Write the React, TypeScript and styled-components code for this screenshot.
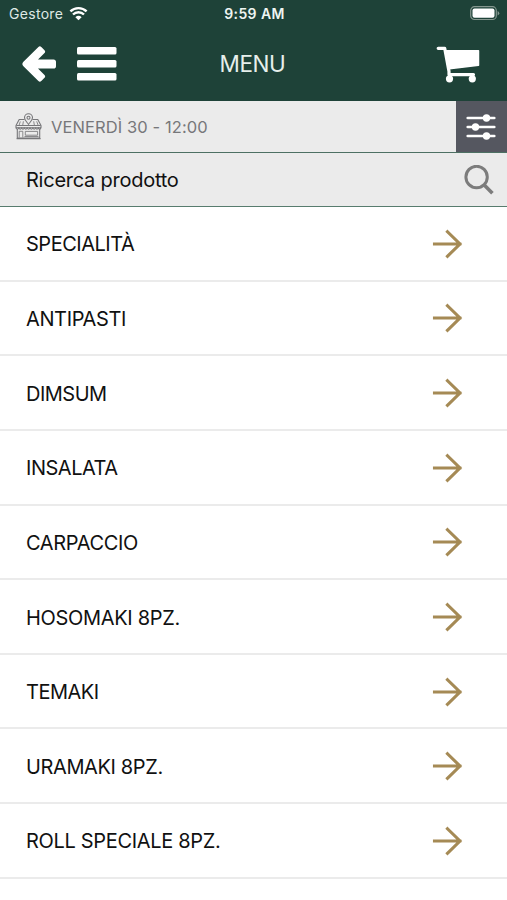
import React from "react";
import styled, { createGlobalStyle } from "styled-components";

const GlobalStyle = createGlobalStyle`
  * { box-sizing: border-box; }
  body { margin: 0; background: #fff; font-family: Inter, "Liberation Sans", sans-serif; color: #111; }
  button { border: 0; padding: 0; background: none; display: flex; color: inherit; font: inherit; }
  svg { display: block; flex: none; }
`;

const Screen = styled.main`
  width: 507px;
  height: 900px;
  overflow: hidden;
  background: #fff;
`;

const Header = styled.header`
  height: 101px;
  background: #1e4238;
  color: #fff;
`;

const ThreeColumns = styled.div`
  display: grid;
  grid-template-columns: 1fr auto 1fr;
  align-items: center;
`;

const StatusBar = styled(ThreeColumns)`
  height: 27px;
  padding: 0 7px 0 9px;
`;

const Carrier = styled.span`
  display: flex;
  align-items: center;
  gap: 6px;
  font-size: 14px;
  letter-spacing: 0.3px;
  color: #dfe9e5;
`;

const Clock = styled.time`
  font-size: 14px;
  font-weight: 600;
  letter-spacing: 0.4px;
  color: #eef5f2;
`;

const End = styled.div`
  display: flex;
  justify-content: flex-end;
`;

const TitleBar = styled(ThreeColumns)`
  height: 74px;
  padding: 0 27px 0 22px;
`;

const Actions = styled.div`
  display: flex;
  align-items: center;
  gap: 19.5px;
`;

const Title = styled.h1`
  margin: 0;
  padding-left: 3px;
  font-size: 22.5px;
  line-height: 28px;
  font-weight: 400;
  letter-spacing: -0.4px;
  color: #e6efeb;
`;

const PickupBar = styled.section`
  height: 52px;
  display: flex;
  align-items: stretch;
  background: #ebebeb;
  border-bottom: 1px solid #4d7063;
`;

const PickupInfo = styled.div`
  flex: 1;
  display: flex;
  align-items: center;
  gap: 9px;
  padding-left: 15px;
  font-size: 16.5px;
  color: #77777a;
`;

const PickupLabel = styled.span`
  letter-spacing: 0.1px;
`;

const FilterButton = styled.button`
  width: 51px;
  align-items: center;
  justify-content: center;
  && { background: #555760; padding-right: 2px; }
`;

const SearchBar = styled.label`
  height: 54px;
  display: flex;
  align-items: center;
  justify-content: space-between;
  padding: 0 13px 0 26px;
  background: #ebebeb;
  border-bottom: 1px solid #587c6e;
`;

const SearchLabel = styled.span`
  font-size: 20px;
  letter-spacing: -0.25px;
`;

const CategoryList = styled.ul`
  margin: 0;
  padding: 0;
  list-style: none;
`;

const Category = styled.li`
  height: 74.65px;
  display: flex;
  align-items: center;
  justify-content: space-between;
  padding: 1px 44px 0 26px;
  border-bottom: 2px solid #ebebeb;
`;

const CategoryName = styled.span<{ $tracking: number }>`
  padding-top: 1px;
  font-size: 20px;
  letter-spacing: ${(p) => p.$tracking}px;
`;

const categories = [
  { name: "SPECIALITÀ", tracking: -0.48 },
  { name: "ANTIPASTI", tracking: -0.38 },
  { name: "DIMSUM", tracking: -0.5 },
  { name: "INSALATA", tracking: -0.48 },
  { name: "CARPACCIO", tracking: -0.36 },
  { name: "HOSOMAKI 8PZ.", tracking: -0.32 },
  { name: "TEMAKI", tracking: -0.5 },
  { name: "URAMAKI 8PZ.", tracking: -0.38 },
  { name: "ROLL SPECIALE 8PZ.", tracking: -0.32 },
];

const WifiIcon = () => (
  <svg width="19" height="15" viewBox="0 0 19 15" fill="none" stroke="#fff" strokeWidth="2.4">
    <path d="M1.4 5.4a11.6 11.6 0 0 1 16.2 0M4 8.5a7.8 7.8 0 0 1 11 0" />
    <path d="M6.4 11.2a4.5 4.5 0 0 1 6.2 0L9.5 14.2z" fill="#fff" stroke="none" />
  </svg>
);

const BatteryIcon = () => (
  <svg width="30" height="15" viewBox="0 0 30 15">
    <rect x=".7" y=".7" width="25.6" height="12.8" rx="3.8" fill="none" stroke="#85978f" strokeWidth="1.2" />
    <rect x="2.5" y="2.4" width="22" height="9.4" rx="2" fill="#fff" />
    <path d="M27.6 5v4.5q1.7-.7 1.7-2.2T27.6 5z" fill="#85978f" />
  </svg>
);

const BackIcon = () => (
  <svg width="35" height="36" viewBox="0 0 35 36" fill="#fff">
    <path d="M1.2 16.1 16.4 1c.9-.9 2-.9 2.9 0l3.2 3.2c.9.9.9 2 0 2.9L16 13.4h15.6c1.5 0 2.4.9 2.4 2.4v4.4c0 1.5-.9 2.4-2.4 2.4H16l6.5 6.3c.9.9.9 2 0 2.9L19.3 35c-.9.9-2 .9-2.9 0L1.2 19.9c-1.1-1.1-1.1-2.7 0-3.8z" />
  </svg>
);

const MenuIcon = () => (
  <svg width="40" height="34" viewBox="0 0 40 34" fill="#fff">
    <rect y="0" width="39.5" height="7.4" rx="1.5" />
    <rect y="13" width="39.5" height="7.4" rx="1.5" />
    <rect y="26" width="39.5" height="7.4" rx="1.5" />
  </svg>
);

const CartIcon = () => (
  <svg width="44" height="37" viewBox="0 0 44 37" fill="none" stroke="#fff" strokeLinecap="round" strokeLinejoin="round">
    <path d="M2.2 2.3h6.5L13 25.4v3.2h24.5" strokeWidth="3.2" />
    <path d="M10 4.7h32.5v14.6L13.4 22.7z" fill="#fff" strokeWidth="1.5" />
    <circle cx="13.5" cy="32.8" r="3.6" fill="#fff" stroke="none" />
    <circle cx="36.3" cy="32.8" r="3.6" fill="#fff" stroke="none" />
  </svg>
);

const StoreIcon = () => (
  <svg width="27" height="27" viewBox="0 0 27 27" fill="none" stroke="#77777a" strokeWidth="1.1" strokeLinejoin="round">
    <path d="M9.6 6.5H4.2L1 12.6v2.2h25v-2.2l-3.2-6.1h-5.4M2.3 16v9h22.4v-9" />
    <path d="M1 14.8q1.4 3 2.8 0 1.4 3 2.8 0 1.4 3 2.8 0 1.4 3 2.8 0 1.4 3 2.8 0 1.4 3 2.8 0 1.4 3 2.8 0 1.4 3 2.8 0 1.2 3 2.4 0M1.3 12.5h24.4M1.6 25.6h24" />
    <path d="M13.5 11.3C11 8.2 9.5 6.9 9.5 4.7a4 4 0 0 1 8 0c0 2.2-1.5 3.5-4 6.6z" fill="#ebebeb" />
    <circle cx="13.5" cy="4.7" r="1.5" />
    <path d="M4.2 24.5v-6.2h3.6v6.2M10.3 18.4h12.3v3.8H10.3zM9.5 23.5h14M5.3 8.5 4 12.4M8.4 8.3l-.7 4.1M18.7 8.3l.7 4.1M21.7 8.3l1.5 4.1" strokeWidth=".85" />
  </svg>
);

const FilterIcon = () => (
  <svg width="30" height="26" viewBox="0 0 30 26" fill="#fff" stroke="#fff" strokeWidth="2.6" strokeLinecap="round">
    <path d="M1.7 4h26.6M1.7 13h26.6M1.7 22h26.6" />
    <circle cx="20.5" cy="4" r="3.7" stroke="none" />
    <circle cx="9.5" cy="13" r="3.7" stroke="none" />
    <circle cx="20.5" cy="22" r="3.7" stroke="none" />
  </svg>
);

const SearchIcon = () => (
  <svg width="30" height="30" viewBox="0 0 30 30" fill="none" stroke="#7c7c7c" strokeWidth="3">
    <circle cx="12.6" cy="12" r="10.7" />
    <path d="m20 19.8 8.4 8.4" strokeWidth="3.6" />
  </svg>
);

const ArrowIcon = () => (
  <svg width="31" height="30" viewBox="0 0 31 30" fill="none" stroke="#a58a55" strokeWidth="3.1" strokeLinecap="square">
    <path d="M2.5 15h25.3M15.5 2.8 28 15 15.5 27.2" />
  </svg>
);

export default function App() {
  return (
    <>
      <GlobalStyle />
      <Screen>
        <Header>
          <StatusBar>
            <Carrier>Gestore <WifiIcon /></Carrier>
            <Clock>9:59 AM</Clock>
            <End><BatteryIcon /></End>
          </StatusBar>
          <TitleBar>
            <Actions>
              <button aria-label="Indietro"><BackIcon /></button>
              <button aria-label="Apri menu"><MenuIcon /></button>
            </Actions>
            <Title>MENU</Title>
            <End><button aria-label="Carrello"><CartIcon /></button></End>
          </TitleBar>
        </Header>
        <PickupBar>
          <PickupInfo>
            <StoreIcon />
            <PickupLabel>VENERDÌ 30 - 12:00</PickupLabel>
          </PickupInfo>
          <FilterButton aria-label="Filtri"><FilterIcon /></FilterButton>
        </PickupBar>
        <SearchBar>
          <SearchLabel>Ricerca prodotto</SearchLabel>
          <SearchIcon />
        </SearchBar>
        <CategoryList>
          {categories.map((c) => (
            <Category key={c.name}>
              <CategoryName $tracking={c.tracking}>{c.name}</CategoryName>
              <ArrowIcon />
            </Category>
          ))}
        </CategoryList>
      </Screen>
    </>
  );
}
